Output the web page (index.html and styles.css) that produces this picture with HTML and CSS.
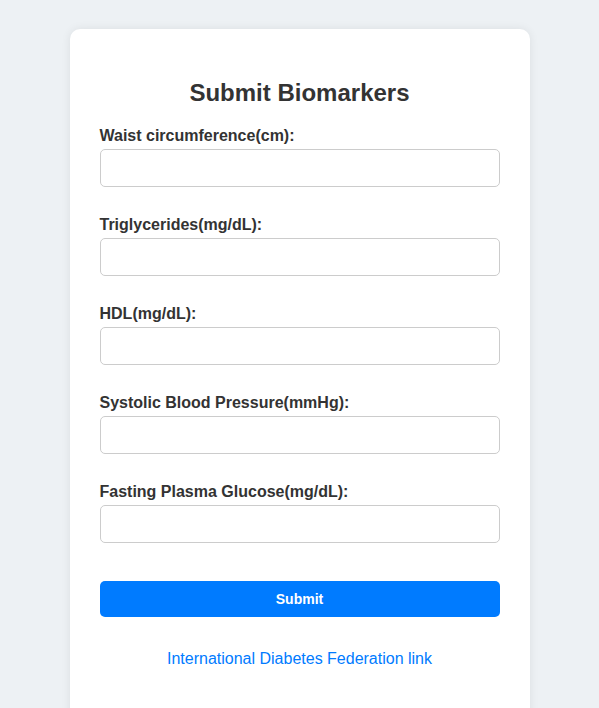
FILE: index.html
```html
<!DOCTYPE html>
<html lang="en">

<head>
    <meta charset="UTF-8">
    <meta name="viewport" content="width=device-width, initial-scale=1.0">
    <title>Submit Biomarkers</title>
    <link rel="stylesheet" href="styles.css">
</head>

<body>
    <div class="container">
        <h2>Submit Biomarkers</h2>
        <form>
            <div class="form-group">
                <label for="waist">Waist circumference(cm):</label>
                <input type="text" id="waist">
            </div>
            <div class="form-group">
                <label for="trig">Triglycerides(mg/dL):</label>
                <input type="text" id="trig">
            </div>
            <div class="form-group">
                <label for="hdl">HDL(mg/dL):</label>
                <input type="text" id="hdl">
            </div>
            <div class="form-group">
                <label for="sbp">Systolic Blood Pressure(mmHg):</label>
                <input type="text" id="sbp">
            </div>
            <div class="form-group">
                <label for="fpg">Fasting Plasma Glucose(mg/dL):</label>
                <input type="text" id="fpg">
            </div>
            <button type="submit">Submit</button>
        </form>
        <p class="link"><a href="#">International Diabetes Federation link</a></p>
    </div>
</body>

</html>
```

FILE: styles.css
```css
* {
    box-sizing: border-box;
}

body {
    margin: 0;
    background-color: #edf1f4;
    font-family: "Liberation Sans", Arial, sans-serif;
    color: #333;
}

.container {
    width: 460px;
    margin: 29px auto 0;
    padding: 30px 30px 60px;
    background-color: #fff;
    border-radius: 10px;
    box-shadow: 0 0 10px rgba(0, 0, 0, 0.08);
}

h2 {
    font-size: 24px;
    text-align: center;
    margin: 20px 0 20px;
}

.form-group {
    margin-bottom: 29px;
}

label {
    display: block;
    font-weight: 700;
    font-size: 16px;
    margin-bottom: 4px;
}

input {
    display: block;
    width: 100%;
    height: 38px;
    padding: 8px;
    font-size: 16px;
    border: 1px solid #ccc;
    border-radius: 5px;
}

button {
    display: block;
    width: 100%;
    height: 36px;
    margin-top: 38px;
    border: none;
    border-radius: 5px;
    background-color: #007bff;
    color: #fff;
    font-family: "Liberation Sans", Arial, sans-serif;
    font-weight: 700;
    font-size: 14px;
    cursor: pointer;
}

.link {
    text-align: center;
    margin: 33px 0 0;
    font-size: 16px;
}

.link a {
    color: #007bff;
    text-decoration: none;
}
```
